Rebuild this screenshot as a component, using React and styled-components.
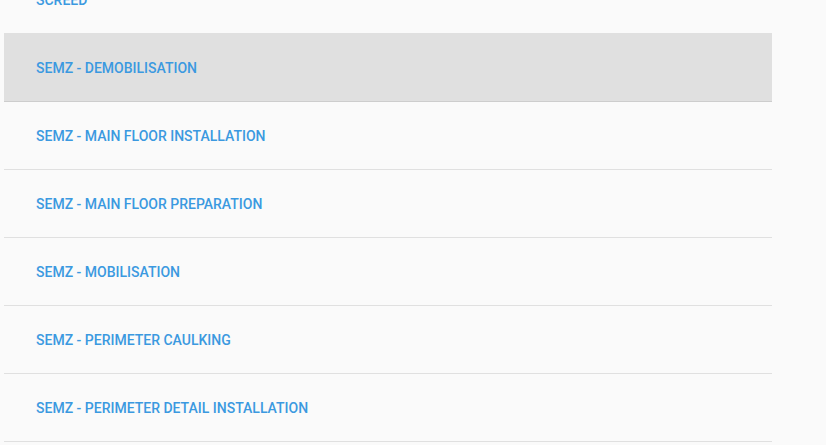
import React from 'react';
import styled, { createGlobalStyle } from 'styled-components';

const GlobalStyle = createGlobalStyle`
  html, body {
    margin: 0;
    padding: 0;
    background: #fafafa;
    font-family: Roboto, "Liberation Sans", Arial, sans-serif;
    overflow: hidden;
  }
`;

const Page = styled.div`
  width: 826px;
  height: 445px;
  overflow: hidden;
  background: #fafafa;
`;

const List = styled.ul`
  list-style: none;
  margin: -34px 0 0 4px;
  padding: 0;
  width: 768px;
`;

const Row = styled.li`
  display: flex;
  align-items: center;
  height: 67px;
  padding-left: 32px;
  border-bottom: 1px solid ${p => (p.$active ? '#cdcdcd' : '#e0e0e0')};
  background: ${p => (p.$active ? '#e0e0e0' : 'transparent')};
  color: #3b99e0;
  font-size: 14px;
  font-weight: 500;
  line-height: 16px;
  text-transform: uppercase;
  cursor: pointer;
`;

const items = [
  'Screed',
  'SEMZ - Demobilisation',
  'SEMZ - Main Floor Installation',
  'SEMZ - Main Floor Preparation',
  'SEMZ - Mobilisation',
  'SEMZ - Perimeter Caulking',
  'SEMZ - Perimeter Detail Installation',
];

export default function App() {
  return (
    <Page>
      <GlobalStyle />
      <List>
        {items.map((t, i) => (
          <Row key={t} $active={i === 1}>
            {t}
          </Row>
        ))}
      </List>
    </Page>
  );
}
